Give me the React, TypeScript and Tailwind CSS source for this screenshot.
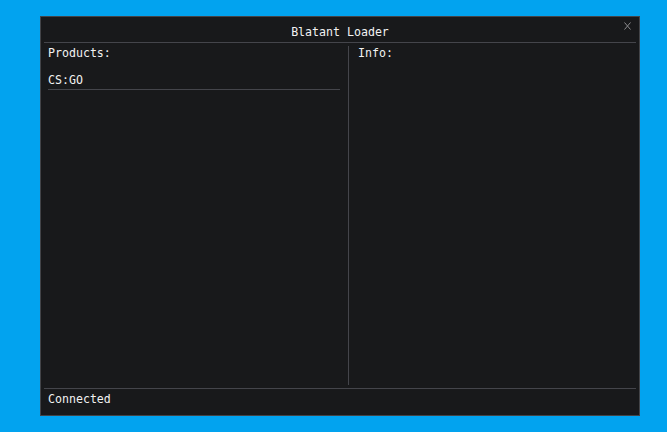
export default function App() {
  const mono = { fontFamily: '"DejaVu Sans Mono", "Liberation Mono", monospace' };

  return (
    <div className="w-[667px] h-[432px] bg-[#02a3ef] pl-[40px] pt-[16px]" style={mono}>
      <div className="w-[600px] h-[400px] border border-[#434448] bg-[#18191b] flex flex-col text-[11.6px] leading-[13px] text-[#f2f2f2]">
        {/* title bar */}
        <div className="relative h-[25px] flex items-center justify-center pt-[6px]">
          <span>Blatant Loader</span>
          <svg className="absolute right-[8px] top-[5px]" width="7" height="8" viewBox="0 0 7 8">
            <path d="M0.5 0.5 L6.5 7.5 M6.5 0.5 L0.5 7.5" stroke="#8c8c8f" strokeWidth="1" fill="none" />
          </svg>
        </div>
        <div className="mx-[3px] h-px bg-[#44454b]" />

        {/* body */}
        <div className="flex-1 flex px-[3px]">
          <div className="w-[304px] pl-[4px] pr-[8px] pt-[4px] flex flex-col">
            <div>Products:</div>
            <div className="mt-[14px] pb-[2px] border-b border-[#44454b]">CS:GO</div>
          </div>
          <div className="w-px my-[3px] bg-[#44454b]" />
          <div className="flex-1 pl-[9px] pt-[4px]">
            <div>Info:</div>
          </div>
        </div>

        <div className="mx-[3px] h-px bg-[#44454b]" />
        <div className="h-[26px] pl-[7px] flex items-center pb-[5px]">Connected</div>
      </div>
    </div>
  );
}
